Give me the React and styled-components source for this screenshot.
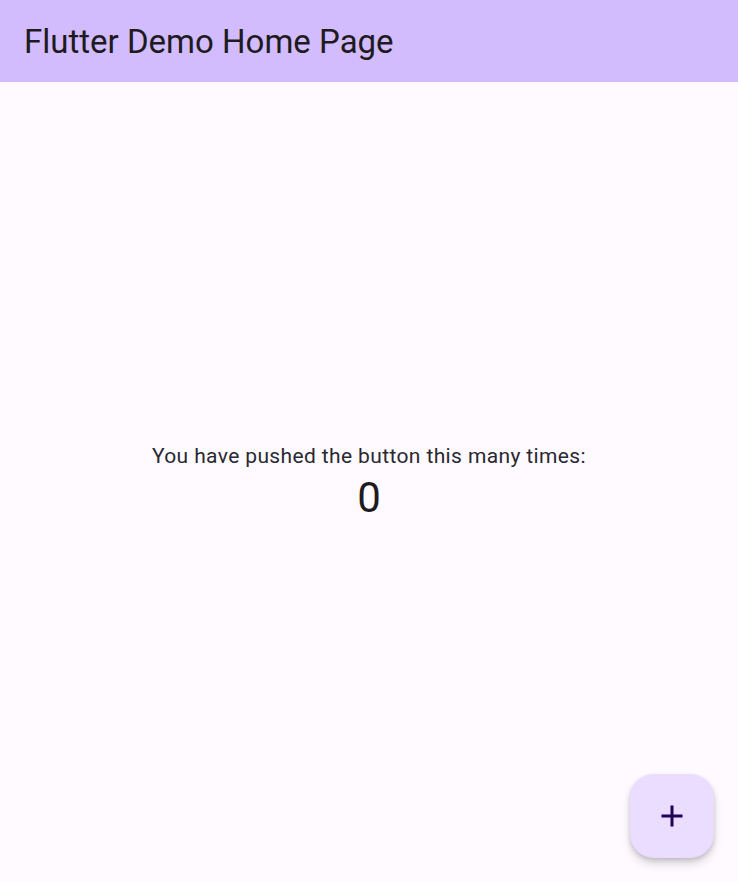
import React, { useState } from "react";
import styled, { createGlobalStyle } from "styled-components";

const GlobalStyle = createGlobalStyle`
    html, body {
        margin: 0;
        padding: 0;
        height: 100%;
        background: #fefaff;
    }
    #root {
        height: 100%;
    }
    * {
        box-sizing: border-box;
    }
`;

const Screen = styled.div`
    position: relative;
    display: flex;
    flex-direction: column;
    width: 100%;
    height: 100vh;
    background: #fefaff;
    font-family: Roboto, "Liberation Sans", sans-serif;
    color: #1d1b20;
    overflow: hidden;
`;

const AppBar = styled.header`
    display: flex;
    align-items: center;
    flex-shrink: 0;
    height: 82px;
    padding: 0 24px;
    background: #d3bcfd;
`;

const Title = styled.h1`
    margin: 0;
    font-size: 33px;
    font-weight: 400;
    line-height: 1;
    color: #1d1b20;
`;

const Body = styled.main`
    flex: 1;
    display: flex;
    flex-direction: column;
    align-items: center;
    justify-content: center;
    padding-top: 2px;
`;

const Label = styled.p`
    margin: 0;
    font-size: 21px;
    line-height: 30px;
    letter-spacing: 0.375px;
    color: #2a2830;
`;

const Counter = styled.div`
    font-size: 42px;
    line-height: 54px;
    color: #1d1b20;
`;

const Fab = styled.button`
    position: absolute;
    right: 24px;
    bottom: 24px;
    display: flex;
    align-items: center;
    justify-content: center;
    width: 84px;
    height: 84px;
    padding: 0;
    border: none;
    border-radius: 24px;
    background: #eaddff;
    color: #21005d;
    cursor: pointer;
    box-shadow: 0 6px 10px rgba(0, 0, 0, 0.14), 0 2px 4px rgba(0, 0, 0, 0.14);
`;

const PlusIcon = () => (
    <svg width="36" height="36" viewBox="0 0 24 24" fill="currentColor">
        <path d="M19 13h-6v6h-2v-6H5v-2h6V5h2v6h6v2z" />
    </svg>
);

const App = () => {
    const [count, setCount] = useState(0);

    return (
        <Screen>
            <GlobalStyle />
            <AppBar>
                <Title>Flutter Demo Home Page</Title>
            </AppBar>
            <Body>
                <Label>You have pushed the button this many times:</Label>
                <Counter>{count}</Counter>
            </Body>
            <Fab aria-label="Increment" onClick={() => setCount(c => c + 1)}>
                <PlusIcon />
            </Fab>
        </Screen>
    );
};

export default App;
